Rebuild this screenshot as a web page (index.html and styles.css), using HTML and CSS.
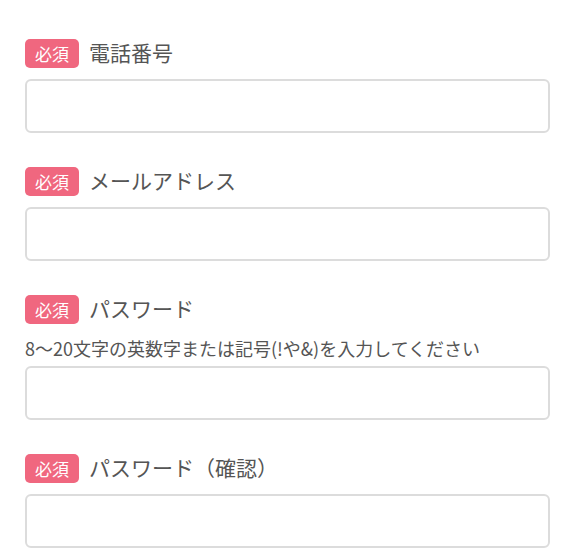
FILE: index.html
```html
<!DOCTYPE html>
<html lang="ja">
<head>
<meta charset="utf-8">
<title>フォーム</title>
<link rel="stylesheet" href="styles.css">
</head>
<body>
<form class="form">
  <div class="field">
    <div class="label-row"><span class="badge">必須</span><span class="label">電話番号</span></div>
    <input class="input" type="tel">
  </div>
  <div class="field">
    <div class="label-row"><span class="badge">必須</span><span class="label">メールアドレス</span></div>
    <input class="input" type="email">
  </div>
  <div class="field">
    <div class="label-row"><span class="badge">必須</span><span class="label">パスワード</span></div>
    <p class="hint">8～20文字の英数字または記号(!や&amp;)を入力してください</p>
    <input class="input" type="password">
  </div>
  <div class="field">
    <div class="label-row"><span class="badge">必須</span><span class="label">パスワード（確認）</span></div>
    <input class="input" type="password">
  </div>
</form>
</body>
</html>
```
FILE: styles.css
```css
html, body {
  margin: 0;
  padding: 0;
  background: #fff;
}
body {
  font-family: "Noto Sans CJK JP", "Noto Sans", sans-serif;
  color: #555;
}
.form {
  width: 525px;
  padding: 39px 0 0 25px;
  margin: 0;
}
.field {
  margin-bottom: 34px;
}
.label-row {
  display: flex;
  align-items: center;
  gap: 10px;
  height: 29px;
  margin-bottom: 11px;
}
.badge {
  display: flex;
  align-items: center;
  justify-content: center;
  width: 54px;
  height: 29px;
  border-radius: 5px;
  background: #f0677f;
  color: #fff;
  font-size: 17px;
  line-height: 1;
}
.label {
  font-size: 21px;
  line-height: 27px;
  padding-bottom: 3px;
  color: #555;
}
.hint {
  margin: 1px 0 5px;
  font-size: 18px;
  line-height: 26px;
  color: #555;
  white-space: nowrap;
}
.input {
  display: block;
  box-sizing: border-box;
  width: 525px;
  height: 54px;
  margin: 0;
  border: 2px solid #dcdcdc;
  border-radius: 6px;
  background: #fff;
  outline: none;
  font: inherit;
}
```
